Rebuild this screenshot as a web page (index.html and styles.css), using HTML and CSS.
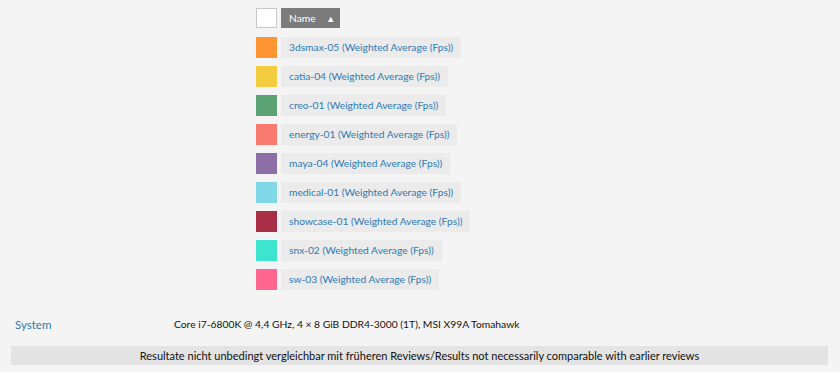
FILE: index.html
```html
<!DOCTYPE html>
<html lang="de">
<head>
<meta charset="utf-8">
<link rel="stylesheet" href="styles.css">
</head>
<body>
<div class="legend">
  <div class="row">
    <span class="check"></span>
    <span class="head">Name <span class="arrow">▲</span></span>
  </div>
  <div class="row"><span class="sw c1"></span><span class="lbl">3dsmax-05 (Weighted Average (Fps))</span></div>
  <div class="row"><span class="sw c2"></span><span class="lbl">catia-04 (Weighted Average (Fps))</span></div>
  <div class="row"><span class="sw c3"></span><span class="lbl">creo-01 (Weighted Average (Fps))</span></div>
  <div class="row"><span class="sw c4"></span><span class="lbl">energy-01 (Weighted Average (Fps))</span></div>
  <div class="row"><span class="sw c5"></span><span class="lbl">maya-04 (Weighted Average (Fps))</span></div>
  <div class="row"><span class="sw c6"></span><span class="lbl">medical-01 (Weighted Average (Fps))</span></div>
  <div class="row"><span class="sw c7"></span><span class="lbl">showcase-01 (Weighted Average (Fps))</span></div>
  <div class="row"><span class="sw c8"></span><span class="lbl">snx-02 (Weighted Average (Fps))</span></div>
  <div class="row"><span class="sw c9"></span><span class="lbl">sw-03 (Weighted Average (Fps))</span></div>
</div>
<div class="system">
  <span class="sys-label">System</span>
  <span class="sys-value">Core i7-6800K @ 4,4 GHz, 4 × 8 GiB DDR4-3000 (1T), MSI X99A Tomahawk</span>
</div>
<div class="note">Resultate nicht unbedingt vergleichbar mit früheren Reviews/Results not necessarily comparable with earlier reviews</div>
</body>
</html>
```
FILE: styles.css
```css
html, body {
  margin: 0;
  padding: 0;
  background: #f4f4f4;
  font-family: Lato, "Liberation Sans", sans-serif;
}
.legend {
  display: flex;
  flex-direction: column;
  gap: 8px;
  padding: 8px 0 0 256px;
}
.row {
  display: flex;
  gap: 4px;
  height: 21px;
  align-items: stretch;
}
.check {
  width: 19px;
  height: 18px;
  border: 1px solid #c8c8c8;
  background: #fff;
}
.head {
  width: 59px;
  height: 20px;
  box-sizing: border-box;
  background: #7b7b7b;
  color: #fff;
  font-size: 10.25px;
  line-height: 20px;
  padding-left: 8px;
}
.arrow {
  font-size: 9px;
  margin-left: 8px;
}
.sw {
  width: 21px;
}
.lbl {
  background: #ebebeb;
  color: #2f7ab3;
  font-size: 10.25px;
  line-height: 21px;
  padding: 0 8px;
}
.c1 { background: #fd9535; }
.c2 { background: #f3cd3f; }
.c3 { background: #5ca373; }
.c4 { background: #f97b70; }
.c5 { background: #8b6fa5; }
.c6 { background: #80d8e7; }
.c7 { background: #a92f47; }
.c8 { background: #3de5cf; }
.c9 { background: #ff6791; }
.system {
  display: flex;
  align-items: center;
  height: 22px;
  margin-top: 23px;
}
.sys-label {
  color: #2f7ab3;
  width: 159px;
  padding-left: 15px;
  font-size: 11.5px;
}
.sys-value {
  color: #111;
  font-size: 10.3px;
}
.note {
  margin: 11px 12px 0 11px;
  background: #e3e3e3;
  height: 19px;
  line-height: 19px;
  text-align: center;
  font-size: 11px;
  color: #111;
}
```
